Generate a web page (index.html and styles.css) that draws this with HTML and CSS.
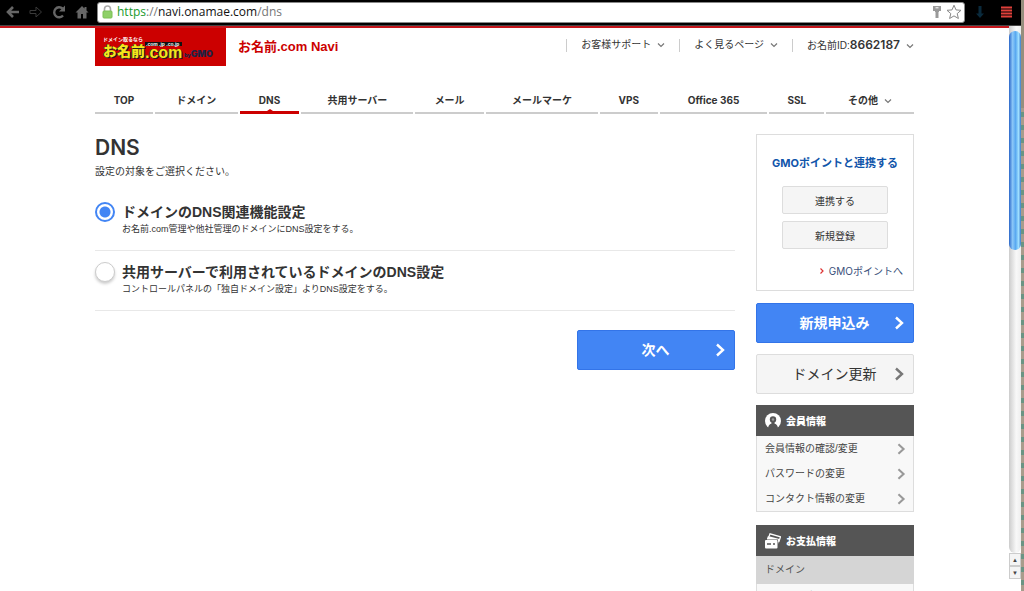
FILE: index.html
```html
<!DOCTYPE html>
<html lang="ja">
<head>
  <meta charset="UTF-8">
  <title>お名前.com Navi</title>
  <link rel="stylesheet" href="styles.css">
</head>
<body>
  <svg class="defs" aria-hidden="true">
    <symbol id="arrow" viewBox="0 0 10 14"><path d="M2 1.5 L8 7 L2 12.5" fill="none" stroke="currentColor" stroke-width="2.4"/></symbol>
    <symbol id="down" viewBox="0 0 8 6"><path d="M1 1.5 L4 4.5 L7 1.5" fill="none" stroke="currentColor" stroke-width="1.2"/></symbol>
  </svg>

  <div class="browser">
    <div class="toolbar">
      <button class="tool" aria-label="戻る">
        <svg width="14" height="12" viewBox="0 0 14 12"><path d="M13 6H3M7 1L2 6l5 5" fill="none" stroke="#666" stroke-width="2.6"/></svg>
      </button>
      <button class="tool" aria-label="進む">
        <svg width="14" height="12" viewBox="0 0 14 12"><path d="M1 4.500h6V1l5.500 5L7 11V7.500H1z" fill="none" stroke="#3a3a3a" stroke-width="1"/></svg>
      </button>
      <button class="tool" aria-label="再読み込み">
        <svg width="14" height="14" viewBox="0 0 14 14"><path d="M11 10.500A5 5 0 1 1 10.500 3.500" fill="none" stroke="#666" stroke-width="2.4"/><path d="M13 0.500V6.500H7z" fill="#666"/></svg>
      </button>
      <button class="tool" aria-label="ホーム">
        <svg width="14" height="14" viewBox="0 0 14 14"><path d="M7 1L0.500 7.500h2V13.500H6V9h2v4.500h3.500V7.500h2L11.500 5.500V2h-2v1.500z" fill="#666"/></svg>
      </button>
      <div class="address">
        <svg width="11" height="14" viewBox="0 0 11 14"><path d="M2.500 7V4a3 3 0 0 1 6 0v3" fill="none" stroke="#aaa" stroke-width="1.600"/><rect x="1" y="6" width="9" height="7" rx="1" fill="#8fd068" stroke="#7cc054"/></svg>
        <a class="url" href="#"><span class="secure">https</span><span class="dim">://</span>navi.onamae.com<span class="dim">/dns</span></a>
        <svg width="10" height="14" viewBox="0 0 10 14"><path d="M1 1h8v5H7v1H6.500v6h-3V7H3V6H1z" fill="#999"/><path d="M3.500 2.800h3" stroke="#fff"/></svg>
        <svg width="16" height="16" viewBox="0 0 16 16"><path d="M8 1.200l2 4.700 5 .4-3.800 3.300 1.200 4.900L8 11.900l-4.400 2.600 1.200-4.900L1 6.300l5-.4z" fill="#fff" stroke="#888"/></svg>
      </div>
      <button class="tool" aria-label="ダウンロード">
        <svg width="10" height="14" viewBox="0 0 10 14"><path d="M3.500 1h3v7.500H9L5 13 1 8.500h2.500z" fill="#0a2a3c"/></svg>
      </button>
      <button class="tool menu" aria-label="メニュー">
        <svg width="11" height="12" viewBox="0 0 11 12"><path d="M0 1.500h11M0 4.500h11M0 7.500h11M0 10.500h11" stroke="#e0403a" stroke-width="2"/></svg>
      </button>
    </div>

    <div class="window">
      <div class="page">
        <div class="container">
          <header class="header">
            <a class="logo" href="#">
              <span class="logo-lead">ドメイン取るなら</span>
              <span class="logo-main">
                <span class="logo-ja">お名前</span>
                <span class="logo-com"><small>.com .jp .co.jp</small><b>.com</b></span>
                <span class="logo-gmo"><small>by</small>GMO</span>
              </span>
            </a>
            <a class="site-name" href="#">お名前.com Navi</a>
            <ul class="utility">
              <li><a href="#">お客様サポート<svg class="down"><use href="#down"/></svg></a></li>
              <li><a href="#">よく見るページ<svg class="down"><use href="#down"/></svg></a></li>
              <li><a href="#">お名前ID:<b>8662187</b><svg class="down"><use href="#down"/></svg></a></li>
            </ul>
          </header>

          <nav class="tabs">
            <a href="#">TOP</a>
            <a href="#">ドメイン</a>
            <a href="#" class="active">DNS</a>
            <a href="#">共用サーバー</a>
            <a href="#">メール</a>
            <a href="#">メールマーケ</a>
            <a href="#">VPS</a>
            <a href="#">Office 365</a>
            <a href="#">SSL</a>
            <a href="#">その他<svg class="down"><use href="#down"/></svg></a>
          </nav>

          <div class="columns">
            <main class="main">
              <h1>DNS</h1>
              <p class="lead">設定の対象をご選択ください。</p>
              <form>
                <div class="choice">
                  <input type="radio" name="target" id="domain" checked>
                  <label for="domain"><strong>ドメインのDNS関連機能設定</strong><span>お名前.com管理や他社管理のドメインにDNS設定をする。</span></label>
                </div>
                <div class="choice">
                  <input type="radio" name="target" id="server">
                  <label for="server"><strong>共用サーバーで利用されているドメインのDNS設定</strong><span>コントロールパネルの「独自ドメイン設定」よりDNS設定をする。</span></label>
                </div>
                <button type="button" class="big primary next"><span>次へ</span><svg class="arrow"><use href="#arrow"/></svg></button>
              </form>
            </main>

            <aside class="side">
              <section class="point">
                <h2>GMOポイントと連携する</h2>
                <button type="button">連携する</button>
                <button type="button">新規登録</button>
                <a href="#"><svg width="4" height="6" viewBox="0 0 4 6"><path d="M0.500 0.500L3 3 0.500 5.500" fill="none" stroke="#d33" stroke-width="1.200"/></svg>GMOポイントへ</a>
              </section>
              <button type="button" class="big primary"><span>新規申込み</span><svg class="arrow"><use href="#arrow"/></svg></button>
              <button type="button" class="big plain"><span>ドメイン更新</span><svg class="arrow"><use href="#arrow"/></svg></button>

              <section class="panel">
                <h2>
                  <svg width="16" height="16" viewBox="0 0 16 16"><circle cx="8" cy="8" r="8" fill="#fff"/><circle cx="8" cy="6.500" r="3.200" fill="#555"/><path d="M3 16Q3 11.500 6.500 10.500V8h3v2.500Q13 11.500 13 16z" fill="#555"/><circle cx="8" cy="6.500" r="1.200" fill="#999"/></svg>
                  会員情報
                </h2>
                <ul>
                  <li><a href="#">会員情報の確認/変更<svg class="arrow small"><use href="#arrow"/></svg></a></li>
                  <li><a href="#">パスワードの変更<svg class="arrow small"><use href="#arrow"/></svg></a></li>
                  <li><a href="#">コンタクト情報の変更<svg class="arrow small"><use href="#arrow"/></svg></a></li>
                </ul>
              </section>

              <section class="panel">
                <h2>
                  <svg width="16" height="16" viewBox="0 0 16 16"><path d="M4 3.500L5 0.800l10.500 3L13.800 9" fill="none" stroke="#fff" stroke-width="1.200"/><path d="M2 5.500L3 3l11.500 3-1.500 5V6.500H2z" fill="#fff"/><rect x="0" y="7" width="12.500" height="8.500" rx="1" fill="#fff"/><path d="M2 11h4M8 11h2" stroke="#555" stroke-width="1.500"/></svg>
                  お支払情報
                </h2>
                <h3>ドメイン</h3>
                <ul>
                  <li><a href="#">お支払い情報<svg class="arrow small"><use href="#arrow"/></svg></a></li>
                </ul>
              </section>
            </aside>
          </div>
        </div>
      </div>
      <div class="scrollbar">
        <div class="track"><div class="thumb"></div></div>
        <button class="step" aria-label="上へ">▲</button>
        <button class="step" aria-label="下へ">▼</button>
      </div>
    </div>
  </div>
  <div class="desktop"></div>
</body>
</html>
```
FILE: styles.css
```css
* {
  box-sizing: border-box;
}
body {
  margin: 0;
  height: 100vh;
  display: flex;
  overflow: hidden;
  font-family: "Liberation Sans", "Noto Sans CJK JP", sans-serif;
  font-size: 10px;
  color: #333;
  background: #fff;
}
a {
  color: inherit;
  text-decoration: none;
}
ul, h1, h2, h3, p {
  margin: 0;
  padding: 0;
  list-style: none;
}
button {
  font-family: inherit;
  color: inherit;
  padding: 0;
  cursor: pointer;
}
.defs {
  display: none;
}
.down {
  width: 8px;
  height: 6px;
  margin-left: 6px;
  color: #777;
}
.arrow {
  width: 10px;
  height: 14px;
}

/* browser toolbar */
.browser {
  flex: 1;
  display: flex;
  flex-direction: column;
  min-width: 0;
}
.toolbar {
  flex: none;
  display: flex;
  align-items: center;
  height: 26px;
  padding: 0 7px 1px 5px;
  background: #000;
  border-bottom: 1px solid #444;
}
.tool {
  flex: none;
  display: flex;
  justify-content: center;
  width: 16px;
  margin-right: 7px;
  background: none;
  border: none;
}
.tool.menu {
  margin: 0 0 0 3px;
}
.address {
  flex: 1;
  display: flex;
  align-items: center;
  gap: 4px;
  height: 21px;
  margin-right: 7px;
  padding: 0 2px 0 4px;
  background: #fff;
  border: 1px solid #888;
  border-radius: 3px;
}
.url {
  flex: 1;
  font-family: "Open Sans", sans-serif;
  font-size: 12px;
  line-height: 18px;
  color: #111;
}
.secure {
  color: #1a9a2c;
}
.dim {
  color: #777;
}

/* window */
.window {
  flex: 1;
  display: flex;
  min-height: 0;
}
.page {
  flex: 1;
  overflow: hidden;
  border-top: 2px solid #c4161c;
}
.container {
  max-width: 819px;
  margin: 0 auto;
}
.header {
  display: flex;
  align-items: flex-start;
}
.logo {
  width: 131px;
  height: 38px;
  padding: 7px 0 0 8px;
  background: #c00;
  color: #fff;
}
.logo-lead {
  display: block;
  font-size: 5px;
  font-weight: bold;
  line-height: 8px;
}
.logo-main {
  display: flex;
  align-items: flex-end;
  height: 17px;
  font-weight: 900;
  color: #f5e51b;
}
.logo-ja {
  font-size: 14px;
  line-height: 17px;
  text-shadow: 1px 1px #222, -1px 0 #222;
}
.logo-com small {
  display: block;
  padding: 0 1px;
  font-size: 5px;
  line-height: 4px;
  color: #fff;
  background: #111;
}
.logo-com b {
  display: block;
  font-size: 16px;
  line-height: 14px;
  text-shadow: 1px 1px #222, -1px 0 #222;
}
.logo-gmo {
  margin-left: 2px;
  font-family: Inter, sans-serif;
  font-size: 9px;
  line-height: 9px;
  color: #224;
}
.logo-gmo small {
  font-size: 5px;
}
.site-name {
  margin-left: 12px;
  font-size: 13px;
  font-weight: bold;
  line-height: 38px;
  color: #c00;
}
.utility {
  display: flex;
  margin-left: auto;
  padding-top: 11px;
  font-size: 10px;
}
.utility li {
  padding: 0 14px;
  line-height: 12px;
  border-left: 1px solid #ccc;
}
.utility li:last-child {
  padding-right: 0;
}
.utility b {
  font-family: Inter, sans-serif;
  font-size: 12px;
  font-weight: 600;
}
.tabs {
  display: grid;
  grid-template-columns: 58fr 83fr 60fr 112fr 69fr 112fr 58fr 108fr 55fr 88fr;
  gap: 2px;
  margin-top: 24px;
}
.tabs a {
  height: 24px;
  font-family: Inter, "Noto Sans CJK JP", sans-serif;
  font-size: 10px;
  font-weight: bold;
  line-height: 20px;
  text-align: center;
  white-space: nowrap;
  border-bottom: 2px solid #ccc;
}
.tabs .active {
  position: relative;
  border-bottom: 3px solid #c00;
}
.tabs .active::after {
  content: "";
  position: absolute;
  bottom: 0;
  left: 50%;
  margin-left: -3px;
  border: 3px solid transparent;
  border-top: 0;
  border-bottom: 2px solid #c00;
}
.columns {
  display: flex;
  gap: 21px;
  padding-top: 20px;
}
.main {
  flex: 1;
}
h1 {
  font-family: Inter, sans-serif;
  font-size: 21px;
  font-weight: 600;
  line-height: 28px;
}
.lead {
  line-height: 20px;
  margin-bottom: 20px;
}
.choice {
  display: flex;
  gap: 7px;
  height: 60px;
  border-bottom: 1px solid #e8e8e8;
}
.choice + .choice {
  padding-top: 11px;
}
.choice:first-child {
  height: 49px;
}
.choice input {
  appearance: none;
  flex: none;
  width: 20px;
  height: 20px;
  margin: 0;
  background: #fff;
  border: 1px solid #ccc;
  border-radius: 50%;
  box-shadow: 0 2px 3px #ccc;
}
.choice input:checked {
  border: 2px solid #4285f4;
  background: radial-gradient(circle, #4285f4 5px, #fff 6px);
  box-shadow: none;
}
.choice strong {
  display: block;
  font-size: 14px;
  line-height: 20px;
}
.choice span {
  display: block;
  font-size: 9px;
  line-height: 14px;
}
.big {
  display: flex;
  align-items: center;
  width: 100%;
  height: 40px;
  padding: 0 9px 0 18px;
  font-size: 14px;
  line-height: 18px;
  border-radius: 2px;
}
.big span {
  flex: 1;
}
.primary {
  color: #fff;
  font-weight: bold;
  background: #4285f4;
  border: 1px solid #3374e8;
}
.plain {
  background: #f5f5f5;
  border: 1px solid #ddd;
}
.plain .arrow {
  color: #777;
}
.next {
  width: 158px;
  margin: 19px 0 0 auto;
}

/* sidebar */
.side {
  flex: none;
  display: flex;
  flex-direction: column;
  gap: 11px;
  width: 158px;
}
.point {
  display: flex;
  flex-direction: column;
  align-items: center;
  height: 157px;
  margin-bottom: 1px;
  padding: 18px 10px 0;
  font-family: Inter, "Noto Sans CJK JP", sans-serif;
  border: 1px solid #ddd;
}
.point h2 {
  margin-bottom: 13px;
  font-size: 11px;
  line-height: 20px;
  white-space: nowrap;
  color: #1155aa;
}
.point button {
  width: 106px;
  height: 28px;
  margin-bottom: 7px;
  font-size: 10px;
  background: #f5f5f5;
  border: 1px solid #ddd;
  border-radius: 2px;
}
.point a {
  align-self: flex-end;
  display: flex;
  align-items: center;
  gap: 5px;
  margin-top: 5px;
  font-size: 10px;
  line-height: 20px;
  color: #3a4f7a;
}
.panel {
  margin-bottom: 2px;
  background: #f8f8f8;
  border: 1px solid #ddd;
  border-top: 0;
}
.panel h2 {
  display: flex;
  align-items: center;
  gap: 5px;
  height: 31px;
  margin: 0 -1px;
  padding-left: 9px;
  font-size: 10px;
  font-weight: 900;
  color: #fff;
  background: #555;
}
.panel h3 {
  margin: 0 -1px;
  padding-left: 9px;
  font-size: 10px;
  font-weight: normal;
  line-height: 28px;
  color: #555;
  background: #d5d5d5;
}
.panel li a {
  display: flex;
  align-items: center;
  justify-content: space-between;
  padding: 0 7px 0 8px;
  font-size: 10px;
  line-height: 25px;
  color: #444;
}
.small {
  height: 12px;
  color: #999;
}

/* scrollbar and desktop edge */
.scrollbar {
  flex: none;
  display: flex;
  flex-direction: column;
  width: 12px;
  padding-bottom: 12px;
}
.track {
  flex: 1;
  padding-top: 5px;
  background: linear-gradient(to right, #ccc, #f8f8f8 60%, #eee);
  border-radius: 0 0 6px 6px;
}
.thumb {
  height: 42%;
  background: linear-gradient(to right, #2a66c8, #8cc8f8 30%, #58a8f0 55%, #a0e0ff 80%, #3a78c8);
  border-radius: 6px;
}
.step {
  height: 13px;
  font-size: 6px;
  color: #444;
  background: #f4f4f4;
  border: 1px solid #ccc;
}
.desktop {
  flex: none;
  width: 3px;
  background: linear-gradient(#968e7e 108px, transparent 108px), repeating-linear-gradient(#a89c8c 0 8px, #6a9484 8px 13px);
}
```
